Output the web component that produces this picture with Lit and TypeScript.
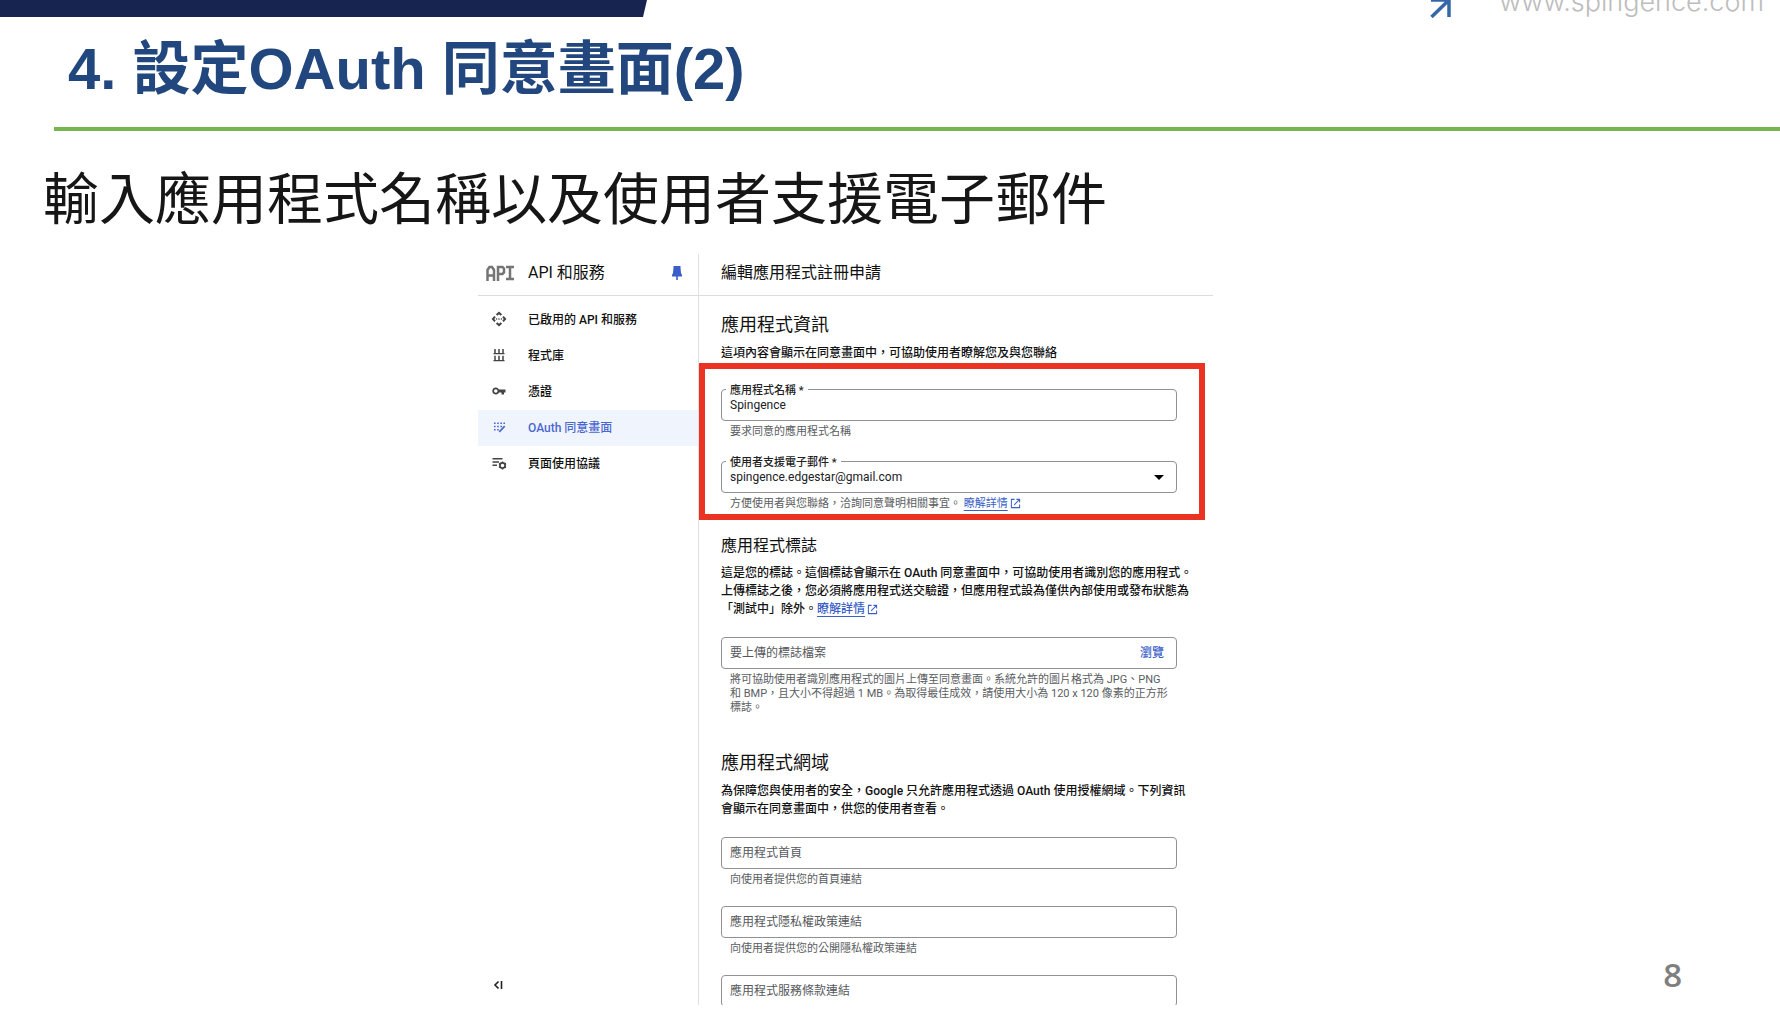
import { LitElement, html, css, svg, nothing } from "lit";
import { customElement, property } from "lit/decorators.js";

const externalIcon = html`<svg class="external" viewBox="0 0 12 12" aria-hidden="true">
  <path d="M5 1.5H1.5v9h9V7M7 1.5h3.5V5M10.5 1.5 4.5 7.5" fill="none" stroke="currentColor" stroke-width="1.1" />
</svg>`;

const navIcons = {
  apis: svg`<path d="M5.600 4 8 1.900 10.400 4M5.600 12 8 14.100l2.400-2.100M4 5.600 1.900 8 4 10.400M12 5.600 14.100 8 12 10.400" fill="none" stroke="currentColor" stroke-width="2"/><circle cx="5.600" cy="8" r=".8"/><circle cx="8" cy="8" r=".8"/><circle cx="10.400" cy="8" r=".8"/>`,
  library: svg`<path d="M4 2v4.500M8 2v4.500M12 2v4.500M4 8.800v4.500M8 8.800v4.500M12 8.800v4.500" stroke="currentColor" stroke-width="1.500"/><path d="M2.500 6h11v1.300h-11zM2.500 12.900h11v1.300h-11z"/>`,
  key: svg`<path d="M4.800 4.500a3.500 3.500 0 1 0 3.200 5h2.500v2H13v-2h1.500v-3H8a3.500 3.500 0 0 0-3.200-2zm0 1.700a1.800 1.800 0 1 1 0 3.600 1.800 1.800 0 0 1 0-3.600z" fill-rule="evenodd"/>`,
  consent: svg`<path d="M3 3.500h1.600v1.600H3zM6.200 3.500h1.600v1.600H6.200zM9.400 3.500H11v1.600H9.400zM12.400 3.500H14v1.600h-1.600zM3 6.700h1.600v1.600H3zM6.200 6.700h1.600v1.600H6.200zM9.400 6.700H11v1.600H9.400zM3 9.900h1.600v1.600H3zM6.200 9.900h1.600v1.600H6.200z"/><path d="m8.300 12.800 5.400-5.600" stroke="currentColor" stroke-width="1.700"/>`,
  agreement: svg`<path d="M1.500 3h10v1.500h-10zM1.500 6.200h6.500v1.500H1.500zM1.500 9.400H6v1.500H1.500z"/><circle cx="11.500" cy="10.500" r="2.600" fill="none" stroke="currentColor" stroke-width="1.700"/><path d="M11.500 6.400V8M11.500 13v1.600M8 8.500l1.300.8M13.700 11.700l1.300.8M8 12.500l1.300-.8M13.700 9.300l1.300-.8" stroke="currentColor" stroke-width="1.500"/>`,
};

@customElement("console-nav")
class ConsoleNav extends LitElement {
  static styles = css`
    :host { display: flex; flex-direction: column; border-right: 1px solid #e0e0e0; }
    .head { display: flex; align-items: center; box-sizing: border-box; height: 42px; padding: 0 16px 3px 8px; border-bottom: 1px solid #dadce0; }
    .logo { width: 28px; height: 16px; margin-right: 14px; color: #757575; }
    .title { flex: 1; margin: 0; font-size: 16px; font-weight: 400; line-height: 24px; }
    .icon-button { display: flex; padding: 0; border: 0; background: none; color: #3b5fc9; }
    .pin { width: 10px; height: 14px; }
    .list { list-style: none; margin: 0; padding: 6px 0 0; }
    .item { display: flex; align-items: center; box-sizing: border-box; height: 36px; padding: 0 0 3px 13px; gap: 21px; font-size: 12px; font-weight: 500; color: #111; text-decoration: none; }
    .item .icon { width: 16px; height: 16px; fill: currentColor; color: #444; }
    .item.active, .item.active .icon { color: #4a67cf; }
    .item.active { background: #f0f4fd; }
    .foot { margin-top: auto; padding: 0 0 16px 15px; }
    .collapse { width: 10px; height: 12px; color: #222; }
  `;
  items = [
    { icon: navIcons.apis, text: "已啟用的 API 和服務", active: false },
    { icon: navIcons.library, text: "程式庫", active: false },
    { icon: navIcons.key, text: "憑證", active: false },
    { icon: navIcons.consent, text: "OAuth 同意畫面", active: true },
    { icon: navIcons.agreement, text: "頁面使用協議", active: false },
  ];
  render() {
    return html`
      <div class="head">
        <svg class="logo" viewBox="0 0 28 16" aria-hidden="true" fill="none" stroke="currentColor" stroke-width="2.500">
          <path d="M1.500 16V5L3.500 2h2.500L8 5v11M1.500 10.500H8M12 16V2h4.500L18 3.500v4L16.500 9H12M20 2h8M20 14h8M24 2v12" />
        </svg>
        <h2 class="title">API 和服務</h2>
        <button class="icon-button" aria-label="取消固定">
          <svg class="pin" viewBox="0 0 10 14"><path d="M1.500 0h7v1.500L9 7l1 2v1.500H5.800V14H4.200v-3.500H0V9l1-2 .5-5.500z" fill="currentColor" /></svg>
        </button>
      </div>
      <nav>
        <ul class="list">
          ${this.items.map((i) => html`<li><a class="item ${i.active ? "active" : ""}" href="#" aria-current=${i.active ? "page" : nothing}>
            <svg class="icon" viewBox="0 0 16 16" aria-hidden="true">${i.icon}</svg>${i.text}</a></li>`)}
        </ul>
      </nav>
      <div class="foot">
        <button class="icon-button" aria-label="收合選單">
          <svg class="collapse" viewBox="0 0 10 12"><path d="M5.500 2.500 2 6l3.500 3.500M8.500 2v8" fill="none" stroke="currentColor" stroke-width="1.600" /></svg>
        </button>
      </div>
    `;
  }
}

@customElement("form-field")
class FormField extends LitElement {
  static styles = css`
    :host { display: block; }
    .box { position: relative; display: flex; align-items: center; box-sizing: border-box; height: 32px; border: 1px solid #8f9195; border-radius: 4px; padding: 0 12px 0 8px; }
    .float { position: absolute; left: 4px; top: -5px; padding: 0 4px; background: #fff; font-size: 11px; line-height: 12px; font-weight: 500; color: #222; }
    .control { flex: 1; min-width: 0; height: 30px; box-sizing: border-box; margin: 0; padding: 0; border: 0; outline: 0; background: none; font: inherit; font-size: 12px; color: #202124; appearance: none; }
    .control::placeholder { color: #55585c; opacity: 1; }
    .arrow { width: 10px; height: 5px; pointer-events: none; }
    .browse { padding: 0 0 3px; border: 0; background: none; font: inherit; font-size: 12px; font-weight: 500; color: #3b5fc9; }
    .hint { margin: 4px 0 0; padding: 0 16px 0 9px; font-size: 11px; line-height: 14px; color: #5a5d61; }
    .line { display: block; white-space: nowrap; }
    a { color: #3b5fc9; text-underline-offset: 3px; }
    .external { width: 11px; height: 11px; margin-left: 2px; vertical-align: -2px; color: #3b5fc9; }
  `;
  @property() label = "";
  @property() value = "";
  @property() kind = "text";
  @property({ attribute: false }) hint: string[] = [];
  @property({ type: Boolean }) more = false;

  control() {
    if (this.kind === "select") {
      return html`<label class="float" for="c">${this.label}</label>
        <select class="control" id="c"><option>${this.value}</option></select>
        <svg class="arrow" viewBox="0 0 10 5" aria-hidden="true"><path d="M0 0h10L5 5z" /></svg>`;
    }
    if (this.value) {
      return html`<label class="float" for="c">${this.label}</label><input class="control" id="c" .value=${this.value} />`;
    }
    return html`<input class="control" aria-label=${this.label} placeholder=${this.label} />
      ${this.kind === "file" ? html`<button class="browse">瀏覽</button>` : nothing}`;
  }
  render() {
    return html`<div class="box">${this.control()}</div>
      ${this.hint.length
        ? html`<p class="hint">${this.hint.map((h, i) => html`<span class="line">${h}${this.more && i === this.hint.length - 1
            ? html` <a href="#">瞭解詳情</a>${externalIcon}` : nothing}</span>`)}</p>`
        : nothing}`;
  }
}

@customElement("consent-form")
class ConsentForm extends LitElement {
  static styles = css`
    :host { display: block; min-width: 0; }
    .head { display: flex; align-items: center; box-sizing: border-box; height: 42px; padding: 0 0 3px 22px; border-bottom: 1px solid #dadce0; }
    .title { margin: 0; font-size: 16px; font-weight: 400; line-height: 24px; }
    .body { display: flow-root; padding: 0 36px 0 22px; }
    .heading { margin: 0; font-weight: 400; line-height: 24px; font-size: 18px; }
    .heading.minor { font-size: 16px; }
    .text { margin: 7px 0 0; font-size: 12px; line-height: 18px; font-weight: 500; }
    .heading.minor + .text { margin-top: 6px; }
    .line { display: block; white-space: nowrap; }
    .info { padding-top: 17px; }
    .marked { margin: 1px -28px 0 -22px; padding: 20px 22px 3px 16px; border: 6px solid #ea3323; display: grid; gap: 22px; }
    .logo { padding-top: 14px; }
    .domain { padding-top: 36px; }
    .upload { margin-top: 19px; }
    .fields { display: grid; gap: 19px; margin-top: 19px; }
    a { color: #3b5fc9; text-underline-offset: 3px; }
    .external { width: 11px; height: 11px; margin-left: 2px; vertical-align: -2px; color: #3b5fc9; }
  `;
  render() {
    return html`
      <header class="head"><h2 class="title">編輯應用程式註冊申請</h2></header>
      <div class="body">
        <section class="info">
          <h3 class="heading">應用程式資訊</h3>
          <p class="text">這項內容會顯示在同意畫面中，可協助使用者瞭解您及與您聯絡</p>
          <div class="marked">
            <form-field label="應用程式名稱 *" value="Spingence" .hint=${["要求同意的應用程式名稱"]}></form-field>
            <form-field kind="select" label="使用者支援電子郵件 *" value="spingence.edgestar@gmail.com" more
              .hint=${["方便使用者與您聯絡，洽詢同意聲明相關事宜。"]}></form-field>
          </div>
        </section>
        <section class="logo">
          <h3 class="heading minor">應用程式標誌</h3>
          <p class="text">
            <span class="line">這是您的標誌。這個標誌會顯示在 OAuth 同意畫面中，可協助使用者識別您的應用程式。</span>
            <span class="line">上傳標誌之後，您必須將應用程式送交驗證，但應用程式設為僅供內部使用或發布狀態為</span>
            <span class="line">「測試中」除外。<a href="#">瞭解詳情</a>${externalIcon}</span>
          </p>
          <form-field class="upload" kind="file" label="要上傳的標誌檔案" .hint=${[
            "將可協助使用者識別應用程式的圖片上傳至同意畫面。系統允許的圖片格式為 JPG、PNG",
            "和 BMP，且大小不得超過 1 MB。為取得最佳成效，請使用大小為 120 x 120 像素的正方形",
            "標誌。",
          ]}></form-field>
        </section>
        <section class="domain">
          <h3 class="heading">應用程式網域</h3>
          <p class="text">
            <span class="line">為保障您與使用者的安全，Google 只允許應用程式透過 OAuth 使用授權網域。下列資訊</span>
            <span class="line">會顯示在同意畫面中，供您的使用者查看。</span>
          </p>
          <div class="fields">
            <form-field label="應用程式首頁" .hint=${["向使用者提供您的首頁連結"]}></form-field>
            <form-field label="應用程式隱私權政策連結" .hint=${["向使用者提供您的公開隱私權政策連結"]}></form-field>
            <form-field label="應用程式服務條款連結"></form-field>
          </div>
        </section>
      </div>
    `;
  }
}

@customElement("app-root")
export class AppRoot extends LitElement {
  static styles = css`
    :host { display: flex; flex-direction: column; box-sizing: border-box; height: 100vh; overflow: hidden; background: #fff; color: #111; font-family: Roboto, "Noto Sans CJK TC", sans-serif; }
    .top { display: flex; justify-content: space-between; height: 17px; }
    .band { width: 647px; height: 17px; background: #182450; clip-path: polygon(0 0, 100% 0, calc(100% - 4px) 100%, 0 100%); }
    .site { display: flex; align-items: flex-end; gap: 48px; height: 18px; padding-right: 16px; }
    .arrow { width: 21px; height: 21px; flex: none; }
    .url { color: #bdbdbd; font: 300 27px/32px Inter, sans-serif; text-decoration: none; }
    .title { margin: 12px 0 0 68px; color: #22477e; font: 700 58px/80px "Liberation Sans", "Noto Sans CJK TC", sans-serif; }
    .rule { margin: 18px 0 0 54px; border: 0; height: 4px; background: #76b64c; }
    .lead { margin: 24px 0 0 43px; font: 400 56px/80px "Noto Sans CJK TC", sans-serif; color: #161616; }
    .main { flex: 1; min-height: 0; display: grid; grid-template-columns: 478px minmax(0, 735px) 1fr; margin: 19px 0 17px; }
    .panel { grid-column: 2; display: grid; grid-template-columns: 221px 1fr; min-height: 0; overflow: hidden; }
    .page { align-self: end; justify-self: end; margin: 0 98px 6px 0; color: #7f7f7f; font: 600 33px/48px "Open Sans", sans-serif; }
  `;
  render() {
    return html`
      <div class="top">
        <div class="band"></div>
        <div class="site">
          <svg class="arrow" viewBox="0 0 21 21" aria-hidden="true"><path d="M1 3h18v17M19 3 1.500 20" fill="none" stroke="#3566a8" stroke-width="3.500" /></svg>
          <a class="url" href="#">www.spingence.com</a>
        </div>
      </div>
      <h1 class="title" lang="zh-TW">4. 設定OAuth 同意畫面(2)</h1>
      <hr class="rule" />
      <p class="lead" lang="zh-TW">輸入應用程式名稱以及使用者支援電子郵件</p>
      <div class="main" lang="zh-TW">
        <div class="panel"><console-nav></console-nav><consent-form></consent-form></div>
        <div class="page">8</div>
      </div>
    `;
  }
}
